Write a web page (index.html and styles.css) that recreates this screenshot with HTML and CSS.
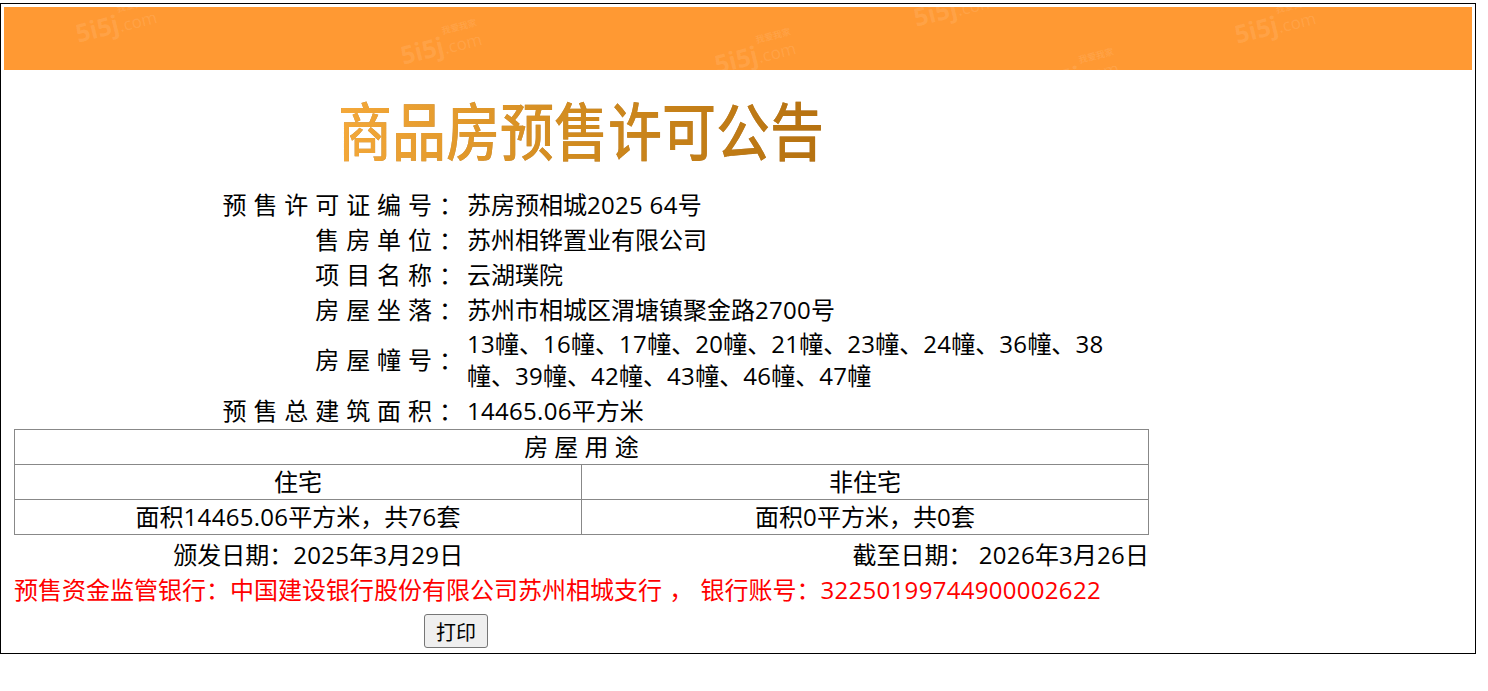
FILE: index.html
```html
<!DOCTYPE html>
<html lang="zh-CN">
<head>
<meta charset="utf-8">
<title>商品房预售许可公告</title>
<link rel="stylesheet" href="styles.css">
</head>
<body>
<div class="frame">
  <div class="banner">
    <span class="wm wm1"><span class="wm-cn">我爱我家</span><b>5i5j</b>.com</span>
    <span class="wm wm2"><span class="wm-cn">我爱我家</span><b>5i5j</b>.com</span>
    <span class="wm wm3"><span class="wm-cn">我爱我家</span><b>5i5j</b>.com</span>
    <span class="wm wm4"><span class="wm-cn">我爱我家</span><b>5i5j</b>.com</span>
    <span class="wm wm5"><span class="wm-cn">我爱我家</span><b>5i5j</b>.com</span>
    <span class="wm wm6"><span class="wm-cn">我爱我家</span><b>5i5j</b>.com</span>
  </div>
  <h1 class="title">商品房预售许可公告</h1>
  <div class="content">
    <dl class="info">
      <div class="row"><dt>预 售 许 可 证 编 号 ：</dt><dd>苏房预相城<span class="n">2025 64</span>号</dd></div>
      <div class="row"><dt>售 房 单 位 ：</dt><dd>苏州相铧置业有限公司</dd></div>
      <div class="row"><dt>项 目 名 称 ：</dt><dd>云湖璞院</dd></div>
      <div class="row"><dt>房 屋 坐 落 ：</dt><dd>苏州市相城区渭塘镇聚金路<span class="n">2700</span>号</dd></div>
      <div class="row row-multi"><dt>房 屋 幢 号 ：</dt><dd><span class="n">13</span>幢、<span class="n">16</span>幢、<span class="n">17</span>幢、<span class="n">20</span>幢、<span class="n">21</span>幢、<span class="n">23</span>幢、<span class="n">24</span>幢、<span class="n">36</span>幢、<span class="n">38</span>幢、<span class="n">39</span>幢、<span class="n">42</span>幢、<span class="n">43</span>幢、<span class="n">46</span>幢、<span class="n">47</span>幢</dd></div>
      <div class="row row-last"><dt>预 售 总 建 筑 面 积 ：</dt><dd><span class="n">14465.06</span>平方米</dd></div>
    </dl>
    <table class="usage">
      <tr><td colspan="2">房 屋 用 途</td></tr>
      <tr><td>住宅</td><td>非住宅</td></tr>
      <tr><td>面积<span class="n">14465.06</span>平方米，共<span class="n">76</span>套</td><td>面积<span class="n">0</span>平方米，共<span class="n">0</span>套</td></tr>
    </table>
    <div class="dates">
      <div class="date-issue">颁发日期：<span class="n">2025</span>年<span class="n">3</span>月<span class="n">29</span>日</div>
      <div class="date-expire">截至日期： <span class="n">2026</span>年<span class="n">3</span>月<span class="n">26</span>日</div>
    </div>
    <div class="bank">预售资金监管银行：中国建设银行股份有限公司苏州相城支行 ， 银行账号：<span class="n">32250199744900002622</span></div>
    <div class="actions"><button class="print" type="button">打印</button></div>
  </div>
</div>
</body>
</html>
```
FILE: styles.css
```css
* { box-sizing: border-box; }
html, body { margin: 0; padding: 0; background: #fff; }
body {
  padding-top: 3px;
  font-family: "Open Sans", "Noto Sans CJK SC", sans-serif;
  font-size: 24px;
  color: #000;
}
.n { letter-spacing: 0.3px; }
.frame {
  width: 1476px;
  height: 651px;
  border: 1px solid #000;
  padding: 3px 3px 0 3px;
}
.banner {
  position: relative;
  height: 63px;
  background: #ff9933;
  overflow: hidden;
}
.wm {
  position: absolute;
  display: block;
  font-family: "Open Sans", sans-serif;
  font-size: 17px;
  line-height: 26px;
  white-space: nowrap;
  color: rgba(255, 255, 255, 0.1);
  transform: rotate(-14deg);
}
.wm b { font-size: 25px; font-weight: 700; }
.wm-cn {
  position: absolute;
  right: 1px;
  top: -5px;
  font: 700 9px/10px "Noto Sans CJK SC", sans-serif;
}
.wm1 { left: 71px; top: 3px; }
.wm2 { left: 396px; top: 25px; }
.wm3 { left: 909px; top: -13px; }
.wm4 { left: 1230px; top: 4px; }
.wm5 { left: 710px; top: 34px; }
.wm6 { left: 1033px; top: 54px; }
.title {
  margin: 27px 0 0 334px;
  width: 494px;
  height: 62px;
  font: 500 54px/62px "Noto Sans CJK SC", sans-serif;
  white-space: nowrap;
  background: linear-gradient(100deg, #f5a93a 0%, #d08a1e 50%, #b4700f 100%);
  -webkit-background-clip: text;
  background-clip: text;
  color: transparent;
  transform: scaleY(1.16);
  filter: drop-shadow(0.5px 0.5px 0 rgba(150, 85, 5, 0.7));
}
.content {
  margin-left: 10px;
  width: 1135px;
  margin-top: 28px;
}
.info { margin: 0; }
.row {
  display: grid;
  grid-template-columns: 453px 650px;
  align-items: center;
  min-height: 35px;
  line-height: 35px;
}
.row-multi { line-height: 32px; min-height: 66px; }
.row-last { min-height: 36px; align-items: start; }
.row dt { text-align: right; white-space: nowrap; padding-right: 4px; word-spacing: 0.7px; }
.row dd { margin: 0; }
.usage {
  width: 1135px;
  border-collapse: collapse;
  table-layout: fixed;
  line-height: 34px;
}
.usage td {
  height: 35px;
  padding: 0;
  border: 1px solid #888;
  text-align: center;
}
.dates {
  display: grid;
  grid-template-columns: 1fr 1fr;
  height: 35px;
  line-height: 40px;
}
.date-issue { text-align: center; padding-left: 41px; }
.date-expire { text-align: right; }
.bank {
  color: #f00;
  height: 35px;
  line-height: 39px;
  word-spacing: 1px;
}
.actions { padding: 9px 0 0 410px; }
.print {
  display: block;
  width: 64px;
  height: 34px;
  padding: 0;
  font: 20px "Noto Sans CJK SC", sans-serif;
  color: #000;
  background: #efefef;
  border: 1px solid #767676;
  border-radius: 3px;
}
```
